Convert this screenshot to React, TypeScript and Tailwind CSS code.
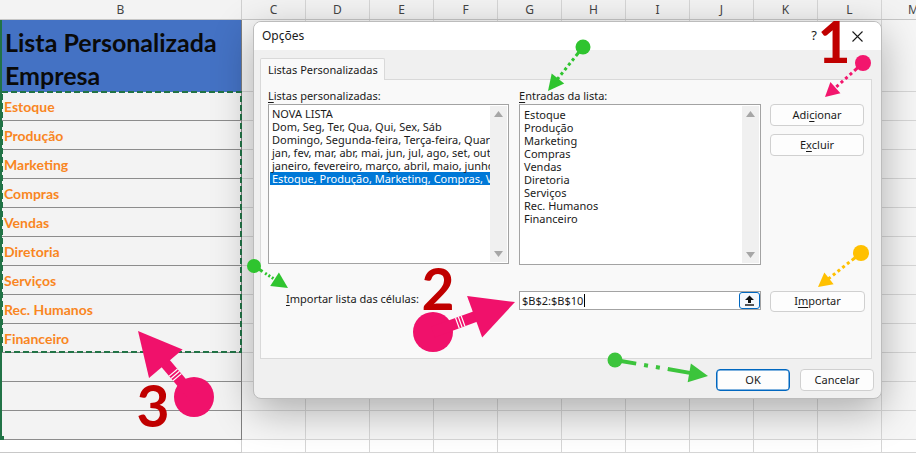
import React from "react";

const cols = ["C", "D", "E", "F", "G", "H", "I", "J", "K", "L", "M"];
const items = ["Estoque", "Produção", "Marketing", "Compras", "Vendas", "Diretoria", "Serviços", "Rec. Humanos", "Financeiro"];
const lists = [
  "NOVA LISTA",
  "Dom, Seg, Ter, Qua, Qui, Sex, Sáb",
  "Domingo, Segunda-feira, Terça-feira, Quarta-feira, Quinta-feira, Sexta-feira, Sábado",
  "jan, fev, mar, abr, mai, jun, jul, ago, set, out, nov, dez",
  "janeiro, fevereiro, março, abril, maio, junho, julho, agosto",
  "Estoque, Produção, Marketing, Compras, Vendas, Diretoria, Serviços, Rec. Humanos, Financeiro",
];

function SmallArrow({ dx, dy, r, tx, ty, color, head = 15, hw = 15, sw = 3, dash = "7 3 3 3 3 3 3 3 3 3" }: any) {
  const vx = tx - dx, vy = ty - dy;
  const L = Math.hypot(vx, vy);
  const ux = vx / L, uy = vy / L;
  const px = -uy, py = ux;
  const bx = tx - ux * head, by = ty - uy * head;
  const sx = dx + ux * r * 0.6, sy = dy + uy * r * 0.6;
  return (
    <g>
      <circle cx={dx} cy={dy} r={r} fill={color} />
      <line x1={sx} y1={sy} x2={bx + ux * 2} y2={by + uy * 2} stroke={color} strokeWidth={sw} strokeDasharray={dash} />
      <polygon points={`${tx},${ty} ${bx + (px * hw) / 2},${by + (py * hw) / 2} ${bx - (px * hw) / 2},${by - (py * hw) / 2}`} fill={color} />
    </g>
  );
}

function BigArrow({ dx, dy, tx, ty, color }: any) {
  const r = 20, head = 43, hw = 44, nw = 11;
  const vx = tx - dx, vy = ty - dy;
  const L = Math.hypot(vx, vy);
  const ux = vx / L, uy = vy / L;
  const px = -uy, py = ux;
  const bx = tx - ux * head, by = ty - uy * head;
  const stripes = [26, 29, 32];
  return (
    <g>
      <circle cx={dx} cy={dy} r={r} fill={color} />
      <line x1={dx} y1={dy} x2={bx + ux * 2} y2={by + uy * 2} stroke={color} strokeWidth={nw} />
      {stripes.map((d) => (
        <line
          key={d}
          x1={dx + ux * d + (px * nw) / 2}
          y1={dy + uy * d + (py * nw) / 2}
          x2={dx + ux * d - (px * nw) / 2}
          y2={dy + uy * d - (py * nw) / 2}
          stroke="#ffffff"
          strokeWidth={1.2}
        />
      ))}
      <polygon points={`${tx},${ty} ${bx + (px * hw) / 2},${by + (py * hw) / 2} ${bx - (px * hw) / 2},${by - (py * hw) / 2}`} fill={color} />
    </g>
  );
}

function ScrollBar() {
  return (
    <div className="w-[17px] shrink-0 bg-[#f0f0f0] flex flex-col justify-between items-center py-[5px]">
      <svg width="9" height="6" viewBox="0 0 9 6"><polygon points="4.5,0 9,6 0,6" fill="#a6a6a6" /></svg>
      <svg width="9" height="6" viewBox="0 0 9 6"><polygon points="0,0 9,0 4.5,6" fill="#a6a6a6" /></svg>
    </div>
  );
}

function Btn({ children, primary = false, w = "w-[94px]", h = "h-[22px]" }: any) {
  return (
    <div
      className={`${w} ${h} rounded-[4px] bg-[#fdfdfd] flex items-center justify-center text-[11px] text-[#1a1a1a] ${
        primary ? "border border-[#0067c0] shadow-[inset_0_0_0_0.5px_#0067c0]" : "border border-[#d0d0d0]"
      }`}
    >
      {children}
    </div>
  );
}

export default function App() {
  return (
    <div className="relative w-[916px] h-[455px] overflow-hidden bg-white font-['Noto_Sans',sans-serif]">
      {/* Column header */}
      <div className="flex h-[20px] bg-[#f3f3f3] border-b border-[#c6c6c6] text-[12px] text-[#444] leading-[19px]">
        <div className="w-[242px] shrink-0 text-center border-r border-[#d0d0d0]">B</div>
        {cols.map((c) => (
          <div key={c} className="w-[64px] shrink-0 text-center border-r border-[#d6d6d6]">
            {c}
          </div>
        ))}
      </div>

      {/* Sheet body */}
      <div className="flex">
        <div className="w-[242px] shrink-0 flex flex-col">
          <div className="border-l-2 border-[#217346] border-r border-r-[#7f7f7f] bg-[#f3f3f3] font-['Lato',sans-serif]">
            <div className="h-[72px] bg-[#4472c4] flex items-end pl-[3px] font-bold text-[25px] leading-[33px] text-[#0a0a0a]">
              <div>
                Lista Personalizada
                <br />
                Empresa
              </div>
            </div>
            {items.map((it) => (
              <div key={it} className="h-[29px] border-b border-[#8c8c8c] flex items-center pl-[2px] pt-[1px] font-bold text-[14px] text-[#f9861f]">
                {it}
              </div>
            ))}
            {[0, 1, 2].map((i) => (
              <div key={i} className="h-[29px] border-b border-[#8c8c8c]" />
            ))}
          </div>
          <div className="h-[13px] border-b border-[#c8c8c8] border-r border-r-[#d0d0d0]" />
        </div>
        {cols.map((c) => (
          <div key={c} className="w-[64px] shrink-0 flex flex-col border-r border-[#d6d6d6] bg-[#f6f6f6]">
            <div className="h-[72px] border-b border-[#d6d6d6]" />
            {Array.from({ length: 12 }).map((_, i) => (
              <div key={i} className="h-[29px] border-b border-[#d6d6d6]" />
            ))}
            <div className="h-[13px] border-b border-[#d6d6d6] bg-white" />
          </div>
        ))}
      </div>

      {/* Marching ants */}
      <svg className="absolute left-0 top-0 pointer-events-none" width="916" height="455">
        <rect x="2" y="92" width="239" height="260" fill="none" stroke="#217346" strokeWidth="2" strokeDasharray="6 3" />
        <rect x="0" y="436" width="4" height="4" fill="#217346" />
      </svg>

      {/* Dialog */}
      <div className="absolute left-[253px] top-[21px] w-[629px] h-[378px] rounded-[8px] bg-[#f0f0f0] border border-[#bcbcbc] shadow-[0_12px_40px_rgba(0,0,0,0.30)] overflow-hidden flex flex-col text-[#1a1a1a]">
        <div className="h-[28px] shrink-0 bg-white flex items-center pl-[8px] pr-[18px]">
          <span className="text-[12px]">Opções</span>
          <span className="ml-auto mr-[35px] text-[13px]">?</span>
          <svg width="11" height="11" viewBox="0 0 11 11">
            <path d="M0.5 0.5 L10.5 10.5 M10.5 0.5 L0.5 10.5" stroke="#1a1a1a" strokeWidth="1.1" />
          </svg>
        </div>
        <div className="flex-1 pl-[6px] pt-[8px] flex flex-col">
          <div className="relative z-10 -mb-px w-[125px] h-[22px] bg-[#f9f9f9] border border-b-0 border-[#d9d9d9] rounded-t-[2px] text-[11px] pl-[7px] leading-[21px]">
            Listas Personalizadas
          </div>
          <div className="w-[612px] h-[280px] bg-[#f9f9f9] border border-[#d9d9d9] pl-[7px] pt-[9px] text-[11px]">
            <div className="flex">
              <div className="w-[241px]">
                <div className="h-[15px] leading-[14px]">
                  <span className="underline underline-offset-[2px]">L</span>istas personalizadas:
                </div>
                <div className="h-[160px] border border-[#a3a3a3] bg-white p-[1px] flex">
                  <div className="flex-1 min-w-0 pt-[1px] overflow-hidden">
                    {lists.map((l, i) => (
                      <div
                        key={i}
                        className={`h-[13px] leading-[13px] pl-[2px] whitespace-nowrap ${
                          i === 5 ? "bg-[#0078d7] text-white" : ""
                        }`}
                      >
                        {l}
                      </div>
                    ))}
                  </div>
                  <ScrollBar />
                </div>
              </div>
              <div className="w-[242px] ml-[10px]">
                <div className="h-[15px] leading-[14px]">
                  <span className="underline underline-offset-[2px]">E</span>ntradas da lista:
                </div>
                <div className="h-[161px] border border-[#a3a3a3] bg-white p-[1px] flex">
                  <div className="flex-1 min-w-0 pt-[2px] overflow-hidden">
                    {items.map((it) => (
                      <div key={it} className="h-[13px] leading-[13px] pl-[3px] whitespace-nowrap">
                        {it}
                      </div>
                    ))}
                  </div>
                  <ScrollBar />
                </div>
              </div>
              <div className="ml-[9px] pt-[15px] flex flex-col gap-[8px]">
                <Btn>
                  Adi<span className="underline underline-offset-[2px]">c</span>ionar
                </Btn>
                <Btn>
                  E<span className="underline underline-offset-[2px]">x</span>cluir
                </Btn>
              </div>
            </div>
            <div className="flex items-start mt-[26px]">
              <div className="w-[251px] pl-[18px] leading-[14px] pt-[1px]">
                <span className="underline underline-offset-[2px]">I</span>mportar lista das células:
              </div>
              <div className="w-[242px] h-[19px] border border-[#a3a3a3] bg-white flex items-center pl-[2px]">
                <span className="leading-[14px]">$B$2:$B$10</span>
                <span className="w-px h-[13px] bg-black ml-px" />
                <div className="ml-auto w-[21px] h-[17px] rounded-[3px] border border-[#0067c0] bg-[#f4f8fd] flex items-center justify-center">
                  <svg width="11" height="11" viewBox="0 0 11 11">
                    <polygon points="5.5,0.5 10,5 7,5 7,8 4,8 4,5 1,5" fill="#111" />
                    <rect x="1" y="9.3" width="9" height="1.4" fill="#111" />
                  </svg>
                </div>
              </div>
              <div className="ml-[9px]">
                <Btn w="w-[95px]" h="h-[21px]">
                  I<span className="underline underline-offset-[2px]">m</span>portar
                </Btn>
              </div>
            </div>
          </div>
          <div className="w-[614px] flex justify-end gap-[10px] mt-[10px]">
            <Btn primary w="w-[74px]" h="h-[22px]">
              OK
            </Btn>
            <Btn w="w-[74px]" h="h-[22px]">
              Cancelar
            </Btn>
          </div>
        </div>
      </div>

      {/* Annotations */}
      <svg className="absolute left-0 top-0 pointer-events-none" width="916" height="455">
        <SmallArrow dx={583} dy={47} r={7.5} tx={548} ty={91} color="#2fc42f" head={16} hw={16} />
        <SmallArrow dx={863} dy={63} r={8} tx={825} ty={97} color="#f2166d" head={14} hw={15} />
        <SmallArrow dx={861} dy={253} r={8} tx={818} ty={287} color="#ffc000" head={14} hw={15} />
        <SmallArrow dx={254} dy={266} r={7} tx={288} ty={288} color="#2fc42f" head={16} hw={16} dash="6 3 2 2 2 2 2 2 20" />
        <SmallArrow dx={615} dy={360} r={7.5} tx={708} ty={376} color="#3cc43c" head={19} hw={19} sw={4} dash="17 8 4 8 4 8 40" />
        <BigArrow dx={433} dy={332} tx={515} ty={302} color="#f0116b" />
        <BigArrow dx={194} dy={397} tx={138} ty={331} color="#f0116b" />
        <g className="font-['Lato',sans-serif]" fill="#c00000" fontWeight="700" fontSize="57" textAnchor="middle">
          <text x="834" y="63">1</text>
          <text x="438" y="310">2</text>
          <text x="153" y="427">3</text>
        </g>
      </svg>
    </div>
  );
}
